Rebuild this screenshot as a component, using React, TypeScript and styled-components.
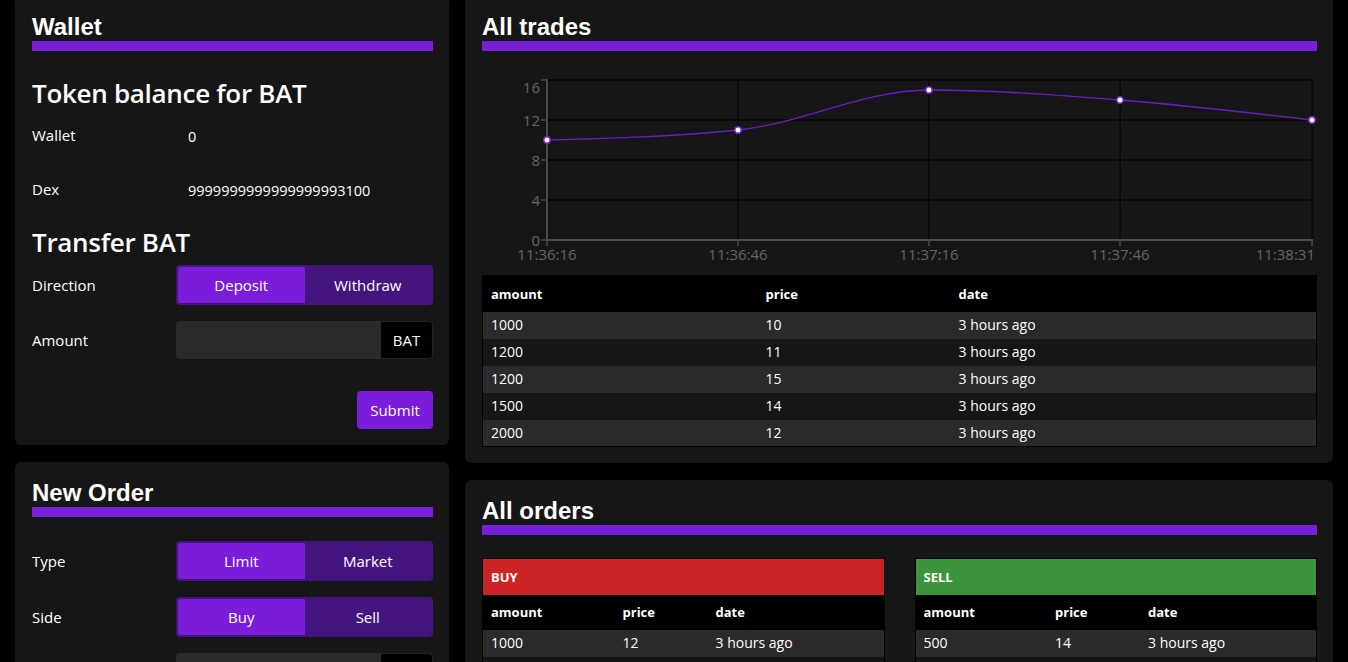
import React from "react";
import styled, { createGlobalStyle } from "styled-components";

const GlobalStyle = createGlobalStyle`
  html, body { margin: 0; padding: 0; background: #000; overflow: hidden; }
  body { font-family: "Open Sans", "Noto Sans", sans-serif; color: #fff; font-size: 15px; }
  * { box-sizing: border-box; }
`;

const PURPLE = "#761fd6";
const PURPLE_DARK = "#45157f";

const Page = styled.div`
  display: flex;
  align-items: flex-start;
  gap: 16px;
  padding: 0 15px;
  margin-top: -4px;
`;

const Column = styled.div<{ $gap: number; $width?: number }>`
  display: flex;
  flex-direction: column;
  gap: ${(p) => p.$gap}px;
  ${(p) => (p.$width ? `width: ${p.$width}px; flex: none;` : "flex: 1; min-width: 0;")}
`;

const Panel = styled.section`
  background: #161616;
  border-radius: 6px;
  padding: 17px 16px 16px 17px;
  display: flex;
  flex-direction: column;
`;

const Heading = styled.h2`
  margin: 0;
  font-family: "Liberation Sans", Arial, sans-serif;
  font-weight: 700;
  font-size: 24px;
  line-height: 28px;
  border-bottom: 10px solid ${PURPLE};
`;

const SubHeading = styled.h3<{ $mt: number }>`
  margin: ${(p) => p.$mt}px 0 0;
  font-size: 26px;
  font-weight: 600;
  line-height: 36px;
  letter-spacing: -0.3px;
`;

const BalanceRow = styled.div<{ $mt: number }>`
  display: grid;
  grid-template-columns: 156px 1fr;
  align-items: center;
  height: 36px;
  margin-top: ${(p) => p.$mt}px;
  font-size: 15px;
`;

const Value = styled.span`
  font-size: 14.5px;
  padding-top: 2px;
`;

const FormRow = styled.div<{ $mt: number }>`
  display: grid;
  grid-template-columns: 144px minmax(0, 1fr);
  align-items: center;
  margin-top: ${(p) => p.$mt}px;
`;

const Label = styled.span`
  font-size: 15px;
`;

const Segmented = styled.div`
  display: grid;
  grid-template-columns: 1fr 1fr;
  height: 40px;
  border: 2px solid ${PURPLE_DARK};
  background: ${PURPLE_DARK};
  border-radius: 4px;
  overflow: hidden;
`;

const Segment = styled.button<{ $active?: boolean }>`
  border: none;
  margin: 0;
  padding: 0;
  font-family: inherit;
  font-size: 15px;
  color: #fff;
  background: ${(p) => (p.$active ? "#7a1cd9" : PURPLE_DARK)};
  display: flex;
  align-items: center;
  justify-content: center;
`;

const InputGroup = styled.div`
  display: flex;
  height: 38px;
  min-width: 0;
`;

const TextInput = styled.input`
  flex: 1 1 0;
  width: 0;
  min-width: 0;
  background: #2a2a2a;
  border: none;
  border-radius: 4px 0 0 4px;
  color: #fff;
  font-family: inherit;
  font-size: 15px;
  padding: 0 12px;
  outline: none;
`;

const Addon = styled.span`
  flex: none;
  width: 52px;
  background: #000;
  border: 1px solid #222;
  border-left: none;
  border-radius: 0 4px 4px 0;
  display: flex;
  align-items: center;
  justify-content: center;
  font-size: 15px;
`;

const SubmitButton = styled.button<{ $mt: number }>`
  align-self: flex-end;
  margin-top: ${(p) => p.$mt}px;
  width: 76px;
  height: 38px;
  border: none;
  border-radius: 4px;
  background: #7a1cd9;
  color: #fff;
  font-family: inherit;
  font-size: 15px;
`;

const ChartBox = styled.div`
  margin-top: 13px;
  height: 204px;
`;

const Table = styled.table<{ $mt?: number }>`
  width: 100%;
  border-collapse: collapse;
  border: 1px solid #000;
  margin-top: ${(p) => p.$mt ?? 0}px;
  table-layout: fixed;
`;

const TitleCell = styled.th<{ $color: string }>`
  background: ${(p) => p.$color};
  height: 36px;
  text-align: left;
  padding: 0 8px;
  font-size: 13px;
  font-weight: 700;
`;

const HeadCell = styled.th<{ $h?: number }>`
  background: #000;
  height: ${(p) => p.$h ?? 36}px;
  text-align: left;
  padding: 0 8px;
  font-size: 13px;
  font-weight: 700;
`;

const Row = styled.tr<{ $odd: boolean }>`
  background: ${(p) => (p.$odd ? "#161616" : "#2a2a2a")};
`;

const Cell = styled.td`
  height: 27px;
  padding: 0 8px 1px;
  font-size: 14px;
`;

const OrdersGrid = styled.div`
  display: grid;
  grid-template-columns: 1fr 1fr;
  gap: 30px;
  margin-top: 23px;
`;

/* ---------- chart ---------- */

const X0 = 65;
const X1 = 830;
const Y_TOP = 16;
const Y_BOT = 176;
const points = [
  { label: "11:36:16", x: 65, v: 10 },
  { label: "11:36:46", x: 256, v: 11 },
  { label: "11:37:16", x: 447, v: 15 },
  { label: "11:37:46", x: 638, v: 14 },
  { label: "11:38:31", x: 830, v: 12 },
];
const yOf = (v: number) => Y_BOT - v * 10;

function monotonePath(pts: { x: number; y: number }[]) {
  const n = pts.length;
  const sign = (x: number) => (x < 0 ? -1 : 1);
  const t: number[] = new Array(n).fill(0);
  for (let i = 1; i < n - 1; i++) {
    const h0 = pts[i].x - pts[i - 1].x;
    const h1 = pts[i + 1].x - pts[i].x;
    const s0 = (pts[i].y - pts[i - 1].y) / h0;
    const s1 = (pts[i + 1].y - pts[i].y) / h1;
    const p = (s0 * h1 + s1 * h0) / (h0 + h1);
    t[i] = (sign(s0) + sign(s1)) * Math.min(Math.abs(s0), Math.abs(s1), 0.5 * Math.abs(p)) || 0;
  }
  const h0 = pts[1].x - pts[0].x;
  t[0] = (3 * (pts[1].y - pts[0].y) / h0 - t[1]) / 2;
  const hn = pts[n - 1].x - pts[n - 2].x;
  t[n - 1] = (3 * (pts[n - 1].y - pts[n - 2].y) / hn - t[n - 2]) / 2;
  let d = `M${pts[0].x},${pts[0].y}`;
  for (let i = 0; i < n - 1; i++) {
    const a = pts[i];
    const b = pts[i + 1];
    const dx = (b.x - a.x) / 3;
    d += ` C${a.x + dx},${a.y + dx * t[i]} ${b.x - dx},${b.y - dx * t[i + 1]} ${b.x},${b.y}`;
  }
  return d;
}

const TradesChart = () => {
  const pts = points.map((p) => ({ x: p.x, y: yOf(p.v) }));
  const yTicks = [0, 4, 8, 12, 16];
  return (
    <svg width="100%" height="204" viewBox="0 0 835 204" style={{ display: "block", overflow: "visible" }}>
      {yTicks.slice(1).map((v) => (
        <line key={v} x1={X0} x2={X1} y1={yOf(v)} y2={yOf(v)} stroke="#060606" strokeWidth="1.6" />
      ))}
      {points.slice(1).map((p) => (
        <line key={p.label} x1={p.x} x2={p.x} y1={Y_TOP} y2={Y_BOT} stroke="#050505" strokeWidth="1.2" />
      ))}
      <line x1={X0} x2={X0} y1={Y_TOP - 1} y2={Y_BOT + 1} stroke="#4a4a4a" strokeWidth="2" />
      <line x1={X0 - 1} x2={X1 + 1} y1={Y_BOT} y2={Y_BOT} stroke="#4a4a4a" strokeWidth="2" />
      {yTicks.map((v) => (
        <line key={v} x1={X0 - 6} x2={X0} y1={yOf(v)} y2={yOf(v)} stroke="#4a4a4a" strokeWidth="1.5" />
      ))}
      {points.map((p) => (
        <line key={p.label} x1={p.x} x2={p.x} y1={Y_BOT} y2={Y_BOT + 6} stroke="#4a4a4a" strokeWidth="1.5" />
      ))}
      <g fontFamily="'Open Sans', 'Noto Sans', sans-serif" fontSize="15" fill="#666">
        {yTicks.map((v) => (
          <text key={v} x={X0 - 7} y={v === 16 ? 23 : yOf(v)} textAnchor="end" dominantBaseline="central">
            {v}
          </text>
        ))}
        {points.map((p, i) => (
          <text
            key={p.label}
            x={i === points.length - 1 ? p.x + 3 : p.x}
            y={190}
            textAnchor={i === points.length - 1 ? "end" : "middle"}
            dominantBaseline="central"
          >
            {p.label}
          </text>
        ))}
      </g>
      <path d={monotonePath(pts)} fill="none" stroke="#6b1cc9" strokeWidth="1.3" />
      {pts.map((p, i) => (
        <circle key={i} cx={p.x} cy={p.y} r="3.2" fill="#fff" stroke="#7a1cd9" strokeWidth="1.4" />
      ))}
    </svg>
  );
};

/* ---------- data ---------- */

const trades = [
  ["1000", "10"],
  ["1200", "11"],
  ["1200", "15"],
  ["1500", "14"],
  ["2000", "12"],
];

const buyOrders = [
  ["1000", "12"],
  ["800", "11"],
  ["500", "10"],
];
const sellOrders = [
  ["500", "14"],
  ["700", "15"],
  ["900", "16"],
];

const OrderTable = ({ title, color, rows }: { title: string; color: string; rows: string[][] }) => (
  <Table>
    <colgroup>
      <col style={{ width: 132 }} />
      <col style={{ width: 93 }} />
      <col />
    </colgroup>
    <thead>
      <tr>
        <TitleCell $color={color} colSpan={3}>
          {title}
        </TitleCell>
      </tr>
      <tr>
        <HeadCell $h={35}>amount</HeadCell>
        <HeadCell $h={35}>price</HeadCell>
        <HeadCell $h={35}>date</HeadCell>
      </tr>
    </thead>
    <tbody>
      {rows.map((r, i) => (
        <Row key={i} $odd={i % 2 === 1}>
          <Cell>{r[0]}</Cell>
          <Cell>{r[1]}</Cell>
          <Cell>3 hours ago</Cell>
        </Row>
      ))}
    </tbody>
  </Table>
);

const Toggle = ({ a, b }: { a: string; b: string }) => (
  <Segmented>
    <Segment $active>{a}</Segment>
    <Segment>{b}</Segment>
  </Segmented>
);

export default function App() {
  return (
    <>
      <GlobalStyle />
      <Page>
        <Column $gap={17} $width={434}>
          <Panel>
            <Heading>Wallet</Heading>
            <SubHeading $mt={24}>Token balance for BAT</SubHeading>
            <BalanceRow $mt={6}>
              <Label>Wallet</Label>
              <Value>0</Value>
            </BalanceRow>
            <BalanceRow $mt={18}>
              <Label>Dex</Label>
              <Value>9999999999999999993100</Value>
            </BalanceRow>
            <SubHeading $mt={17}>Transfer BAT</SubHeading>
            <FormRow $mt={5}>
              <Label>Direction</Label>
              <Toggle a="Deposit" b="Withdraw" />
            </FormRow>
            <FormRow $mt={16}>
              <Label>Amount</Label>
              <InputGroup>
                <TextInput />
                <Addon>BAT</Addon>
              </InputGroup>
            </FormRow>
            <SubmitButton $mt={32}>Submit</SubmitButton>
          </Panel>
          <Panel>
            <Heading>New Order</Heading>
            <FormRow $mt={24}>
              <Label>Type</Label>
              <Toggle a="Limit" b="Market" />
            </FormRow>
            <FormRow $mt={16}>
              <Label>Side</Label>
              <Toggle a="Buy" b="Sell" />
            </FormRow>
            <FormRow $mt={16}>
              <Label>Amount</Label>
              <InputGroup>
                <TextInput />
                <Addon>BAT</Addon>
              </InputGroup>
            </FormRow>
            <FormRow $mt={16}>
              <Label>Price</Label>
              <InputGroup>
                <TextInput />
                <Addon>ETH</Addon>
              </InputGroup>
            </FormRow>
            <SubmitButton $mt={32}>Submit</SubmitButton>
          </Panel>
        </Column>
        <Column $gap={17}>
          <Panel>
            <Heading>All trades</Heading>
            <ChartBox>
              <TradesChart />
            </ChartBox>
            <Table $mt={7}>
              <colgroup>
                <col style={{ width: 275 }} />
                <col style={{ width: 193 }} />
                <col />
              </colgroup>
              <thead>
                <tr>
                  <HeadCell>amount</HeadCell>
                  <HeadCell>price</HeadCell>
                  <HeadCell>date</HeadCell>
                </tr>
              </thead>
              <tbody>
                {trades.map((r, i) => (
                  <Row key={i} $odd={i % 2 === 1}>
                    <Cell>{r[0]}</Cell>
                    <Cell>{r[1]}</Cell>
                    <Cell>3 hours ago</Cell>
                  </Row>
                ))}
              </tbody>
            </Table>
          </Panel>
          <Panel>
            <Heading>All orders</Heading>
            <OrdersGrid>
              <OrderTable title="BUY" color="#cc2424" rows={buyOrders} />
              <OrderTable title="SELL" color="#3c943c" rows={sellOrders} />
            </OrdersGrid>
          </Panel>
        </Column>
      </Page>
    </>
  );
}
